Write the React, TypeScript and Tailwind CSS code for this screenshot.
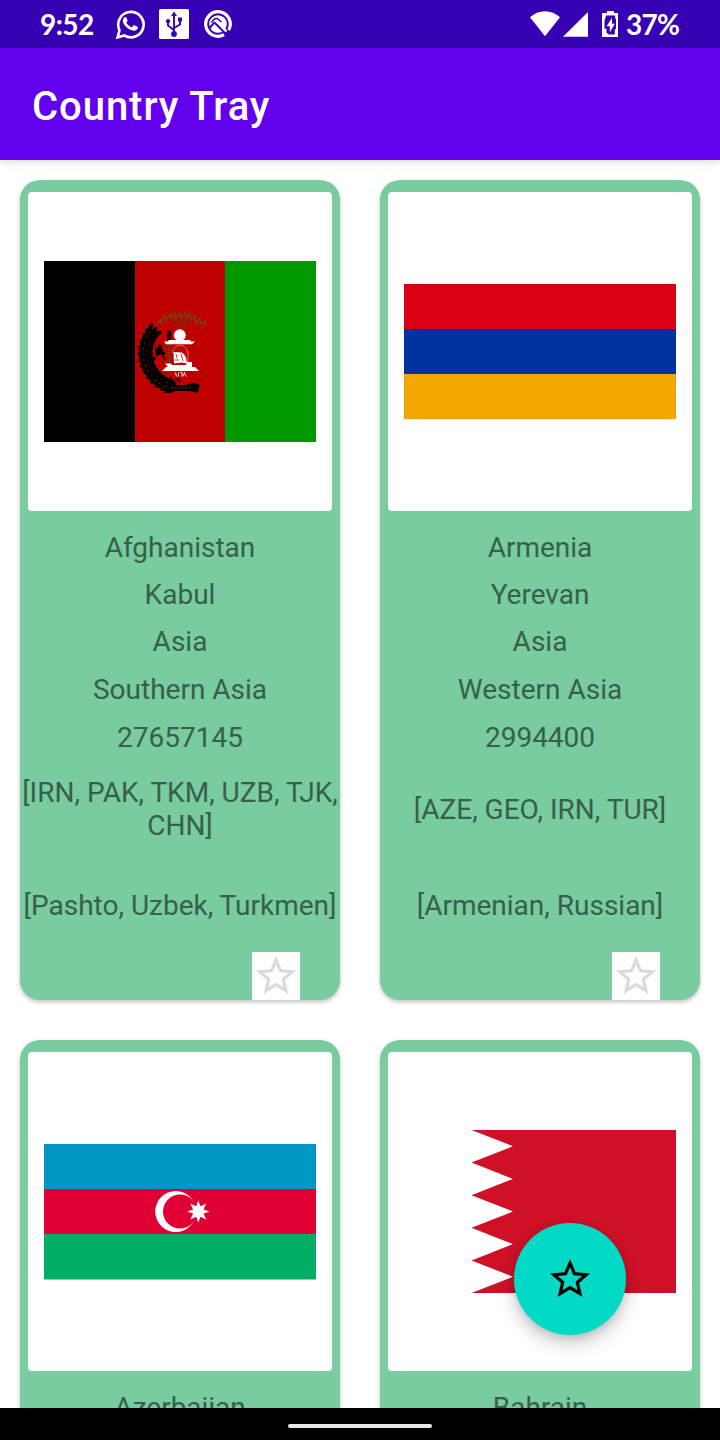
import type { ReactNode } from "react";

const STAR =
  "M22 9.24l-7.19-.62L12 2 9.19 8.63 2 9.24l5.46 4.73L5.82 21 12 17.27 18.18 21l-1.63-7.03L22 9.24zM12 15.4l-3.76 2.27 1-4.28-3.32-2.88 4.38-.38L12 6.1l1.71 4.04 4.38.38-3.32 2.88 1 4.28L12 15.4z";

function StarIcon({ className }: { className: string }) {
  return (
    <svg viewBox="0 0 24 24" className={className} fill="currentColor">
      <path d={STAR} />
    </svg>
  );
}

function StatusBar() {
  return (
    <div className="flex h-12 shrink-0 items-center bg-[#3700b3] pl-10 pr-[41px] font-['Lato',sans-serif] text-[28px] font-bold leading-[48px] text-white">
      <span className="w-[74px] whitespace-nowrap tracking-[-0.6px]">9:52</span>
      <svg viewBox="0 0 32 32" className="h-8 w-8" fill="none">
        <path d="M3.6 29.4 5.5 22.2A12.7 12.7 0 1 1 10.2 27.4Z" stroke="white" strokeWidth="2.6" />
        <path
          d="M10.3 9.4c.7-.7 1.7-.7 2.1.2l1.1 2.7c.2.6-.2 1.1-1.2 2.2 1.4 2.5 3.1 3.9 5.5 4.9l1.5-1.8c.4-.5.8-.5 1.4-.2l2.5 1.2c.7.3.8.7.5 1.6-.6 1.8-2.5 2.8-4.6 2.4C14 21.6 9.3 16.8 8.9 13.2c-.1-1.5.4-2.8 1.4-3.8Z"
          fill="white"
        />
      </svg>
      <svg viewBox="0 0 30 30" className="ml-[13px] h-[30px] w-[30px]" fill="none">
        <rect width="30" height="30" rx="1.6" fill="white" />
        <path d="M15 6v18M9 13v3.5l6 4.5M21 11v4.5L15 19" stroke="#3700b3" strokeWidth="1.9" />
        <path d="M15 2.6 18 7h-6Z" fill="#3700b3" />
        <circle cx="15" cy="25" r="2.9" fill="#3700b3" />
        <circle cx="9" cy="12.2" r="2.1" fill="#3700b3" />
        <rect x="19" y="8.5" width="4" height="4" fill="#3700b3" />
      </svg>
      <svg viewBox="0 0 30 30" className="ml-[14px] h-[30px] w-[30px]" fill="none">
        <path d="M21 25.7A12.3 12.3 0 1 1 25.7 21" stroke="white" strokeWidth="3.2" />
        <circle cx="15" cy="15" r="8.8" fill="white" />
        <path d="m6.5 19 4.900-5.400 4.600 4.400 7.500 7.500" stroke="#3700b3" strokeWidth="2" />
        <path d="m8.500 13.800c1.500-3.200 4-4.600 6-4.200l4 3.400" stroke="#3700b3" strokeWidth="1.500" />
        <path d="m18.500 17.500 5 5" stroke="white" strokeWidth="2.400" />
      </svg>
      <div className="ml-auto flex items-center">
        <svg viewBox="0 0 60 28" className="h-7 w-[60px]" fill="white">
          <path d="M0 7.2C8.5-.9 21.5-.9 30 7.2L15 26.2Z" />
          <path d="M58 2v24.7H33Z" />
        </svg>
        <svg viewBox="0 0 18 28" className="ml-3 h-7 w-[18px]">
          <path d="M5 1h7v2h4v24H0V3h5Z" fill="white" />
          <path d="M4.2 5.6h9v2.8l.8.6v9.6l-1.2 1.2v4.6H7l-2.5-1.6v-4H2.500V10.500Z" fill="#3700b3" />
          <path d="m10 7.8-5.4 8.4h3.2v6.3l5-8.800H10Z" fill="white" />
        </svg>
        <span className="ml-[6px] w-[53px] whitespace-nowrap tracking-[-0.7px]">37%</span>
      </div>
    </div>
  );
}

const wreathAngles = [104, 113, 122, 131, 140, 149, 158, 167, 176, 185, 194, 203, 212, 221];

function Wreath() {
  return (
    <g fill="#000">
      {wreathAngles.map((angle) => (
        <g key={angle} transform={`rotate(${angle} 180 353)`}>
          <ellipse cx="219" cy="353" rx="2" ry="4.6" transform="rotate(-28 219 353)" />
          <ellipse cx="214.5" cy="353" rx="2" ry="4.2" />
          <ellipse cx="210" cy="353" rx="2" ry="4.6" transform="rotate(28 210 353)" />
        </g>
      ))}
    </g>
  );
}

function AfghanistanFlag() {
  return (
    <svg viewBox="44 261 272 181" className="h-[181px] w-[272px]" fill="none">
      <path d="M44 261h91v181H44z" fill="#000" />
      <path d="M135 261h90v181h-90z" fill="#bf0000" />
      <path d="M225 261h91v181h-91z" fill="#009900" />
      <Wreath />
      <path d="M141 355c5 5 9 0 14 5m-6 14c6 5 9 0 15 4" stroke="#000" strokeWidth="4" />
      <path d="m165 383 8 2h12l9-2 6 2-3 8-7-2h-18l-8 2 3-6Z" fill="#000" />
      <path d="M171 388h20" stroke="#a12618" strokeWidth="1" strokeDasharray="2 1.5" />
      <path d="M167.3 330.5h4v9.500h-4z" fill="#210400" />
      <path d="M169.3 344v22" stroke="#6b380c" strokeWidth="3.6" strokeDasharray="3 .8" />
      <path d="m159 344 6 16" stroke="#000" strokeWidth="1.6" />
      <path d="m155 349 6-4 2 6 3 3-6 .5-4 2Z" fill="#000" />
      <path
        d="m157 325 3-5 1 3 4-8 1 6 4-8 1 6 4-7 1 8 4-8 1 7 4-7 1 8 4-7 1 8 4-6 1 8 4-5 1 7 4-4 1 5"
        stroke="#774112"
        strokeWidth="1.2"
      />
      <path d="M158 322q22-15 46 3" stroke="#71420f" strokeWidth="2" strokeDasharray="2 1.5" />
      <path d="m172 323 5-2 4 2 4-3 4 3m-14 5 3-3m5 3 5-2" stroke="#62370d" strokeWidth="1.5" />
      <circle cx="179.8" cy="335.2" r="5.9" fill="white" />
      <path d="M169 340h21l1 1.500h4l-3 2.800h-26l-2-2.800h4Z" fill="white" />
      <path d="M172.500 353a7.700 7.700 0 0 1 15.400 0v9" stroke="#e08080" strokeWidth=".8" />
      <path d="M173.500 352l8 .5q5 2 5.500 11l-5-1-8 1Z" fill="white" />
      <path d="m176 354 1 4m4-4 2 7m-8-1h4" stroke="#bf0000" strokeWidth=".8" />
      <path d="M165 363.500h6l1 1.500h14l1-3h5v5h3l4 4h-37l4-4h2z" fill="white" />
      <path d="m175.500 372.500 1 4m2-4v4m1.500-4h2v4m1 0 1.500-4 1.500 4" stroke="white" strokeWidth=".9" />
      <path d="m170 376 2 4m3-1h5m-3 2h4" stroke="#350000" strokeWidth="1.5" />
    </svg>
  );
}

function ArmeniaFlag() {
  return (
    <svg viewBox="0 0 272 136" className="h-[136px] w-[272px]">
      <path d="M0 0h272v45H0z" fill="#d90012" />
      <path d="M0 45h272v45H0z" fill="#0033a0" />
      <path d="M0 90h272v45.3H0z" fill="#f2a800" />
    </svg>
  );
}

function AzerbaijanFlag() {
  return (
    <svg viewBox="44 1144 272 136" className="h-[136px] w-[272px]">
      <path d="M44 1144h272v45H44z" fill="#0098c3" />
      <path d="M44 1189h272v45H44z" fill="#e00034" />
      <path d="M44 1234h272v45.6H44z" fill="#00ae65" />
      <circle cx="175.7" cy="1211.5" r="20.5" fill="white" />
      <circle cx="180" cy="1211.5" r="17" fill="#e00034" />
      <path
        d="m198.3 1200.2 2.1 6.1 5.9-2.8-2.8 5.9 6.1 2.1-6.1 2.1 2.8 5.9-5.9-2.8-2.1 6.1-2.1-6.1-5.9 2.8 2.8-5.9-6.1-2.1 6.1-2.1-2.8-5.9 5.9 2.8Z"
        fill="white"
      />
    </svg>
  );
}

function BahrainFlag() {
  return (
    <svg viewBox="0 0 272 163" className="h-[163px] w-[272px]">
      <path
        d="M67.5 0H272v163H67.5l41.5-16.3-41.5-16.3L109 114.1 67.5 97.8 109 81.5 67.5 65.2 109 48.9 67.5 32.6 109 16.3Z"
        fill="#ce1126"
      />
    </svg>
  );
}

interface Country {
  name: string;
  capital?: string;
  region?: string;
  subregion?: string;
  population?: string;
  borders?: string;
  languages?: string;
  flag: ReactNode;
}

const countries: Country[] = [
  {
    name: "Afghanistan",
    capital: "Kabul",
    region: "Asia",
    subregion: "Southern Asia",
    population: "27657145",
    borders: "[IRN, PAK, TKM, UZB, TJK, CHN]",
    languages: "[Pashto, Uzbek, Turkmen]",
    flag: <AfghanistanFlag />,
  },
  {
    name: "Armenia",
    capital: "Yerevan",
    region: "Asia",
    subregion: "Western Asia",
    population: "2994400",
    borders: "[AZE, GEO, IRN, TUR]",
    languages: "[Armenian, Russian]",
    flag: <ArmeniaFlag />,
  },
  { name: "Azerbaijan", flag: <AzerbaijanFlag /> },
  { name: "Bahrain", flag: <BahrainFlag /> },
];

function CountryCard({ country }: { country: Country }) {
  return (
    <article className="flex h-[820px] w-80 flex-col rounded-[20px] bg-[#79cba0] pt-3 text-center text-[28px] leading-[48px] text-[#366049] shadow-[0_2px_4px_rgba(0,0,0,0.25)]">
      <div className="mx-2 mb-[13px] flex h-[319px] shrink-0 items-center justify-center rounded-[4px] bg-white">
        {country.flag}
      </div>
      <p className="h-[47px] shrink-0">{country.name}</p>
      <p className="h-[47px] shrink-0">{country.capital}</p>
      <p className="h-12 shrink-0">{country.region}</p>
      <p className="h-12 shrink-0">{country.subregion}</p>
      <p className="h-[47px] shrink-0">{country.population}</p>
      <p className="-mx-1 flex h-24 shrink-0 items-center justify-center leading-[33px]">{country.borders}</p>
      <p className="flex h-24 shrink-0 items-center justify-center whitespace-nowrap leading-[33px]">
        {country.languages}
      </p>
      <button className="-mt-px ml-auto mr-10 flex h-12 w-12 shrink-0 items-center justify-center bg-white text-[#dcd8de]">
        <StarIcon className="h-12 w-12" />
      </button>
    </article>
  );
}

export default function App() {
  return (
    <div className="relative flex h-[1440px] w-[720px] flex-col overflow-hidden bg-white font-['Roboto',sans-serif]">
      <StatusBar />
      <header className="z-10 flex h-28 shrink-0 items-center bg-[#6200ee] pl-8 pt-[6px] shadow-[0_2px_8px_rgba(0,0,0,0.14)]">
        <h1 className="text-[40px] font-medium tracking-[0.95px] text-white">Country Tray</h1>
      </header>
      <main className="grid min-h-0 flex-1 grid-cols-[320px_320px] content-start gap-10 overflow-hidden px-5 pt-5">
        {countries.map((country) => (
          <CountryCard key={country.name} country={country} />
        ))}
      </main>
      <footer className="z-10 flex h-8 shrink-0 items-center justify-center bg-black pt-1">
        <div className="h-1 w-36 rounded-full bg-[#e8e8e8]" />
      </footer>
      <button className="absolute bottom-[105px] right-[94px] flex h-28 w-28 items-center justify-center rounded-full bg-[#03dac5] text-black shadow-[0_8px_18px_rgba(0,0,0,0.22),0_2px_6px_rgba(0,0,0,0.1)]">
        <StarIcon className="h-12 w-12" />
      </button>
    </div>
  );
}
